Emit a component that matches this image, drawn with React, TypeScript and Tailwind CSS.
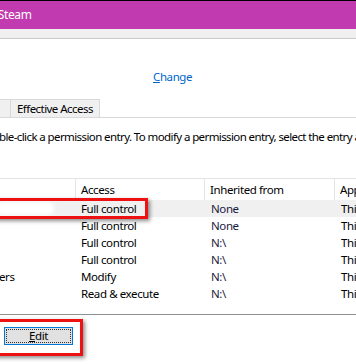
import React from "react";

const rows = [
  { who: "", access: "Full control", from: "None", applies: "This folder, subfolders and files" },
  { who: "", access: "Full control", from: "None", applies: "This folder, subfolders and files" },
  { who: "", access: "Full control", from: "N:\\", applies: "This folder, subfolders and files" },
  { who: "", access: "Full control", from: "N:\\", applies: "This folder, subfolders and files" },
  { who: "ers", access: "Modify", from: "N:\\", applies: "This folder, subfolders and files" },
  { who: "", access: "Read & execute", from: "N:\\", applies: "This folder, subfolders and files" },
];

export default function App() {
  return (
    <div
      className="relative w-[356px] h-[364px] overflow-hidden bg-white text-[11.5px] tracking-[-0.4px] text-black"
      style={{ fontFamily: '"Noto Sans", "Open Sans", sans-serif' }}
    >
      {/* Title bar */}
      <div className="h-[29px] border-t border-black bg-[#c23ab0] flex items-center text-white text-[12px] whitespace-nowrap">
        <span className="ml-[-20px]">for Steam</span>
      </div>
      <div className="h-[10px] bg-[#f0f0f0] border-b border-[#c9c9c9]" />

      {/* Owner / change link */}
      <div className="h-[60px] flex items-end pb-[15px] pl-[153px]">
        <span className="text-[#0066cc] leading-[14px]">
          <span className="underline">C</span>hange
        </span>
      </div>

      {/* Tabs */}
      <div className="h-[19px] flex items-end border-b border-[#d9d9d9]">
        <div className="w-[11px] h-[18px] bg-[#f0f0f0] border-t border-r border-[#d9d9d9]" />
        <div className="h-[18px] px-[6px] bg-[#f0f0f0] border-t border-r border-[#d9d9d9] flex items-center leading-none tracking-[-0.55px]">
          Effective Access
        </div>
      </div>

      {/* Instruction */}
      <div className="mt-[11px] h-[16px] whitespace-nowrap overflow-hidden leading-[16px] ml-[-1px] tracking-[-0.6px]">
        ble-click a permission entry. To modify a permission entry, select the entry and click Edit (if available).
      </div>

      {/* Table */}
      <div className="mt-[33px] border-t border-[#e3e3e3]">
        <div className="h-[21px] flex items-center whitespace-nowrap">
          <div className="w-[76px] h-full border-r border-[#e5e5e5]" />
          <div className="w-[129px] h-full pl-[5px] flex items-center border-r border-[#e5e5e5]">Access</div>
          <div className="w-[130px] h-full pl-[5px] flex items-center border-r border-[#e5e5e5]">Inherited from</div>
          <div className="flex-1 h-full pl-[5px] flex items-center overflow-hidden">Applies to</div>
        </div>
        {rows.map((r, i) => (
          <div
            key={i}
            className={`h-[17px] flex items-center whitespace-nowrap ${i === 0 ? "bg-[#f0f0f0]" : ""}`}
          >
            <div className="w-[76px] h-full flex items-center overflow-hidden">
              {i === 0 ? (
                <div className="ml-[-4px] w-[58px] h-[13px] rounded-full bg-white blur-[2px]" />
              ) : (
                <span className="ml-[-1px]">{r.who}</span>
              )}
            </div>
            <div className="w-[129px] pl-[5px]">{r.access}</div>
            <div className="w-[130px] pl-[6px] text-[#1a1a40]">{r.from}</div>
            <div className="flex-1 pl-[6px] overflow-hidden">{r.applies}</div>
          </div>
        ))}
      </div>

      {/* Divider */}
      <div className="mt-[12px] border-t border-[#8f8f8f]" />

      {/* Edit button */}
      <div className="pt-[12px] pl-[4px]">
        <div className="w-[69px] h-[18px] border border-[#0078d7] bg-[#e1e1e1] p-[1px]">
          <div className="h-full border border-dotted border-[#333] flex items-center justify-center leading-none">
            <span>
              <span className="underline">E</span>dit
            </span>
          </div>
        </div>
      </div>

      {/* Red highlight annotations */}
      <div className="absolute left-[-10px] top-[198px] w-[158px] h-[21px] border-[3px] border-[#ee1111] shadow-[2px_2px_4px_rgba(0,0,0,0.45)]" />
      <div className="absolute left-[-10px] top-[319px] w-[93px] h-[37px] border-[3px] border-[#ee1111] shadow-[2px_2px_4px_rgba(0,0,0,0.45)]" />
    </div>
  );
}
